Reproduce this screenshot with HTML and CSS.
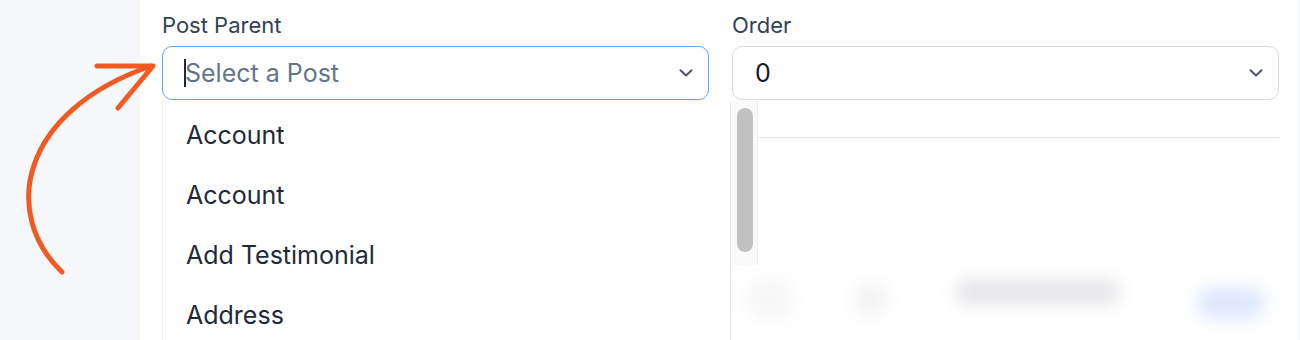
FILE: index.html
```html
<!DOCTYPE html>
<html lang="en">
<head>
    <meta charset="UTF-8">
    <meta name="viewport" content="width=device-width, initial-scale=1.0">
    <title>Post Parent</title>
    <link rel="stylesheet" href="styles.css">
</head>
<body>
    <aside class="sidebar">
        <svg class="hint-arrow" xmlns="http://www.w3.org/2000/svg" viewBox="0 0 170 290" fill="none" stroke="currentColor" stroke-width="5" stroke-linecap="round" stroke-linejoin="round">
            <path d="M62 272 C 2 215, 18 112, 151 66" />
            <path d="M97 66 L 153 66 L 118 108" />
        </svg>
    </aside>

    <main class="content">
        <div class="fields">
            <div class="field field-parent">
                <label class="label">Post Parent</label>
                <div class="select is-focused">
                    <span class="placeholder">Select a Post</span>
                    <svg class="chevron" xmlns="http://www.w3.org/2000/svg" viewBox="0 0 14 8" fill="none" stroke="currentColor" stroke-width="2" stroke-linecap="round" stroke-linejoin="round">
                        <path d="M1.5 1.2 L7 6.5 L12.5 1.2" />
                    </svg>
                </div>

                <div class="dropdown">
                    <ul class="options">
                        <li>Account</li>
                        <li>Account</li>
                        <li>Add Testimonial</li>
                        <li>Address</li>
                    </ul>
                    <div class="scroll-track">
                        <div class="scroll-thumb"></div>
                    </div>
                </div>
            </div>

            <div class="field">
                <label class="label">Order</label>
                <div class="select">
                    <span class="value">0</span>
                    <svg class="chevron" xmlns="http://www.w3.org/2000/svg" viewBox="0 0 14 8" fill="none" stroke="currentColor" stroke-width="2" stroke-linecap="round" stroke-linejoin="round">
                        <path d="M1.5 1.2 L7 6.5 L12.5 1.2" />
                    </svg>
                </div>
            </div>
        </div>

        <hr class="divider">

        <!-- blurred footer behind the popup -->
        <div class="footer-blur">
            <span class="blob blob-left"></span>
            <span class="blob blob-dot"></span>
            <span class="blob blob-text"></span>
            <span class="blob blob-button"></span>
        </div>
    </main>
</body>
</html>
```

FILE: styles.css
```css
body {
    font-family: Inter, "Noto Sans", sans-serif;
    display: flex;
    margin: 0;
    height: 340px;
    overflow: hidden;
    background-color: #fff;
    color: #1e293b;
}

.sidebar {
    position: relative;
    width: 140px;
    flex-shrink: 0;
    background-color: #f6f7fb;
}

.hint-arrow {
    position: absolute;
    left: 0;
    top: 0;
    width: 170px;
    height: 290px;
    color: #f15a22;
    z-index: 3;
}

.content {
    flex: 1;
    padding: 12px 19px 0 22px;
    border-right: 2px solid #f4f5f7;
}

.fields {
    display: grid;
    grid-template-columns: 547px 547px;
    gap: 23px;
}

.field {
    position: relative;
}

.label {
    display: block;
    font-size: 22px;
    line-height: 26px;
    color: #334155;
    margin-bottom: 8px;
}

.select {
    display: flex;
    align-items: center;
    justify-content: space-between;
    height: 54px;
    box-sizing: border-box;
    padding: 0 15px 0 22px;
    border: 1px solid #d5dae2;
    border-radius: 10px;
    font-size: 25px;
    background-color: #fff;
}

.select.is-focused {
    border-color: #60a5fa;
}

.placeholder {
    position: relative;
    color: #64748b;
}

.placeholder::before {
    content: "";
    position: absolute;
    left: -1px;
    top: 1px;
    width: 2px;
    height: 28px;
    background-color: #1e293b;
}

.value {
    color: #0f172a;
}

.chevron {
    width: 14px;
    height: 8px;
    color: #4b5563;
}

.dropdown {
    position: absolute;
    top: 89px;
    left: 0;
    width: 569px;
    height: 239px;
    box-sizing: border-box;
    background-color: #fff;
    border-left: 1px solid #eceef2;
    border-right: 1px solid #e5e7eb;
    z-index: 2;
}

.options {
    list-style: none;
    margin: 0;
    padding: 4px 0 0;
}

.options li {
    height: 60px;
    line-height: 60px;
    padding-left: 23px;
    font-size: 25px;
    color: #1e293b;
}

.scroll-track {
    position: absolute;
    top: 0;
    left: 568px;
    width: 27px;
    height: 164px;
    box-sizing: border-box;
    padding: 7px 0 0 6px;
    background-color: #fafafa;
    border-right: 1px solid #ededed;
}

.scroll-thumb {
    width: 16px;
    height: 144px;
    border-radius: 8px;
    background-color: #c1c1c1;
}

.divider {
    margin: 37px 0 0;
    border: none;
    border-top: 1px solid #e2e6ec;
}

.footer-blur {
    display: flex;
    align-items: center;
    height: 60px;
    margin-top: 131px;
}

.blob {
    display: block;
    filter: blur(9px);
}

.blob-left {
    width: 50px;
    height: 46px;
    margin-left: 583px;
    border-radius: 20px;
    background-color: #f7f7f7;
}

.blob-dot {
    width: 36px;
    height: 36px;
    margin-left: 58px;
    border-radius: 50%;
    background-color: #f3f3f3;
}

.blob-text {
    width: 165px;
    height: 24px;
    margin-left: 66px;
    margin-top: -14px;
    border-radius: 12px;
    background-color: #e3e4e7;
}

.blob-button {
    width: 66px;
    height: 30px;
    margin-left: 78px;
    margin-top: 8px;
    border-radius: 12px;
    background-color: #dbe6fd;
}
```
